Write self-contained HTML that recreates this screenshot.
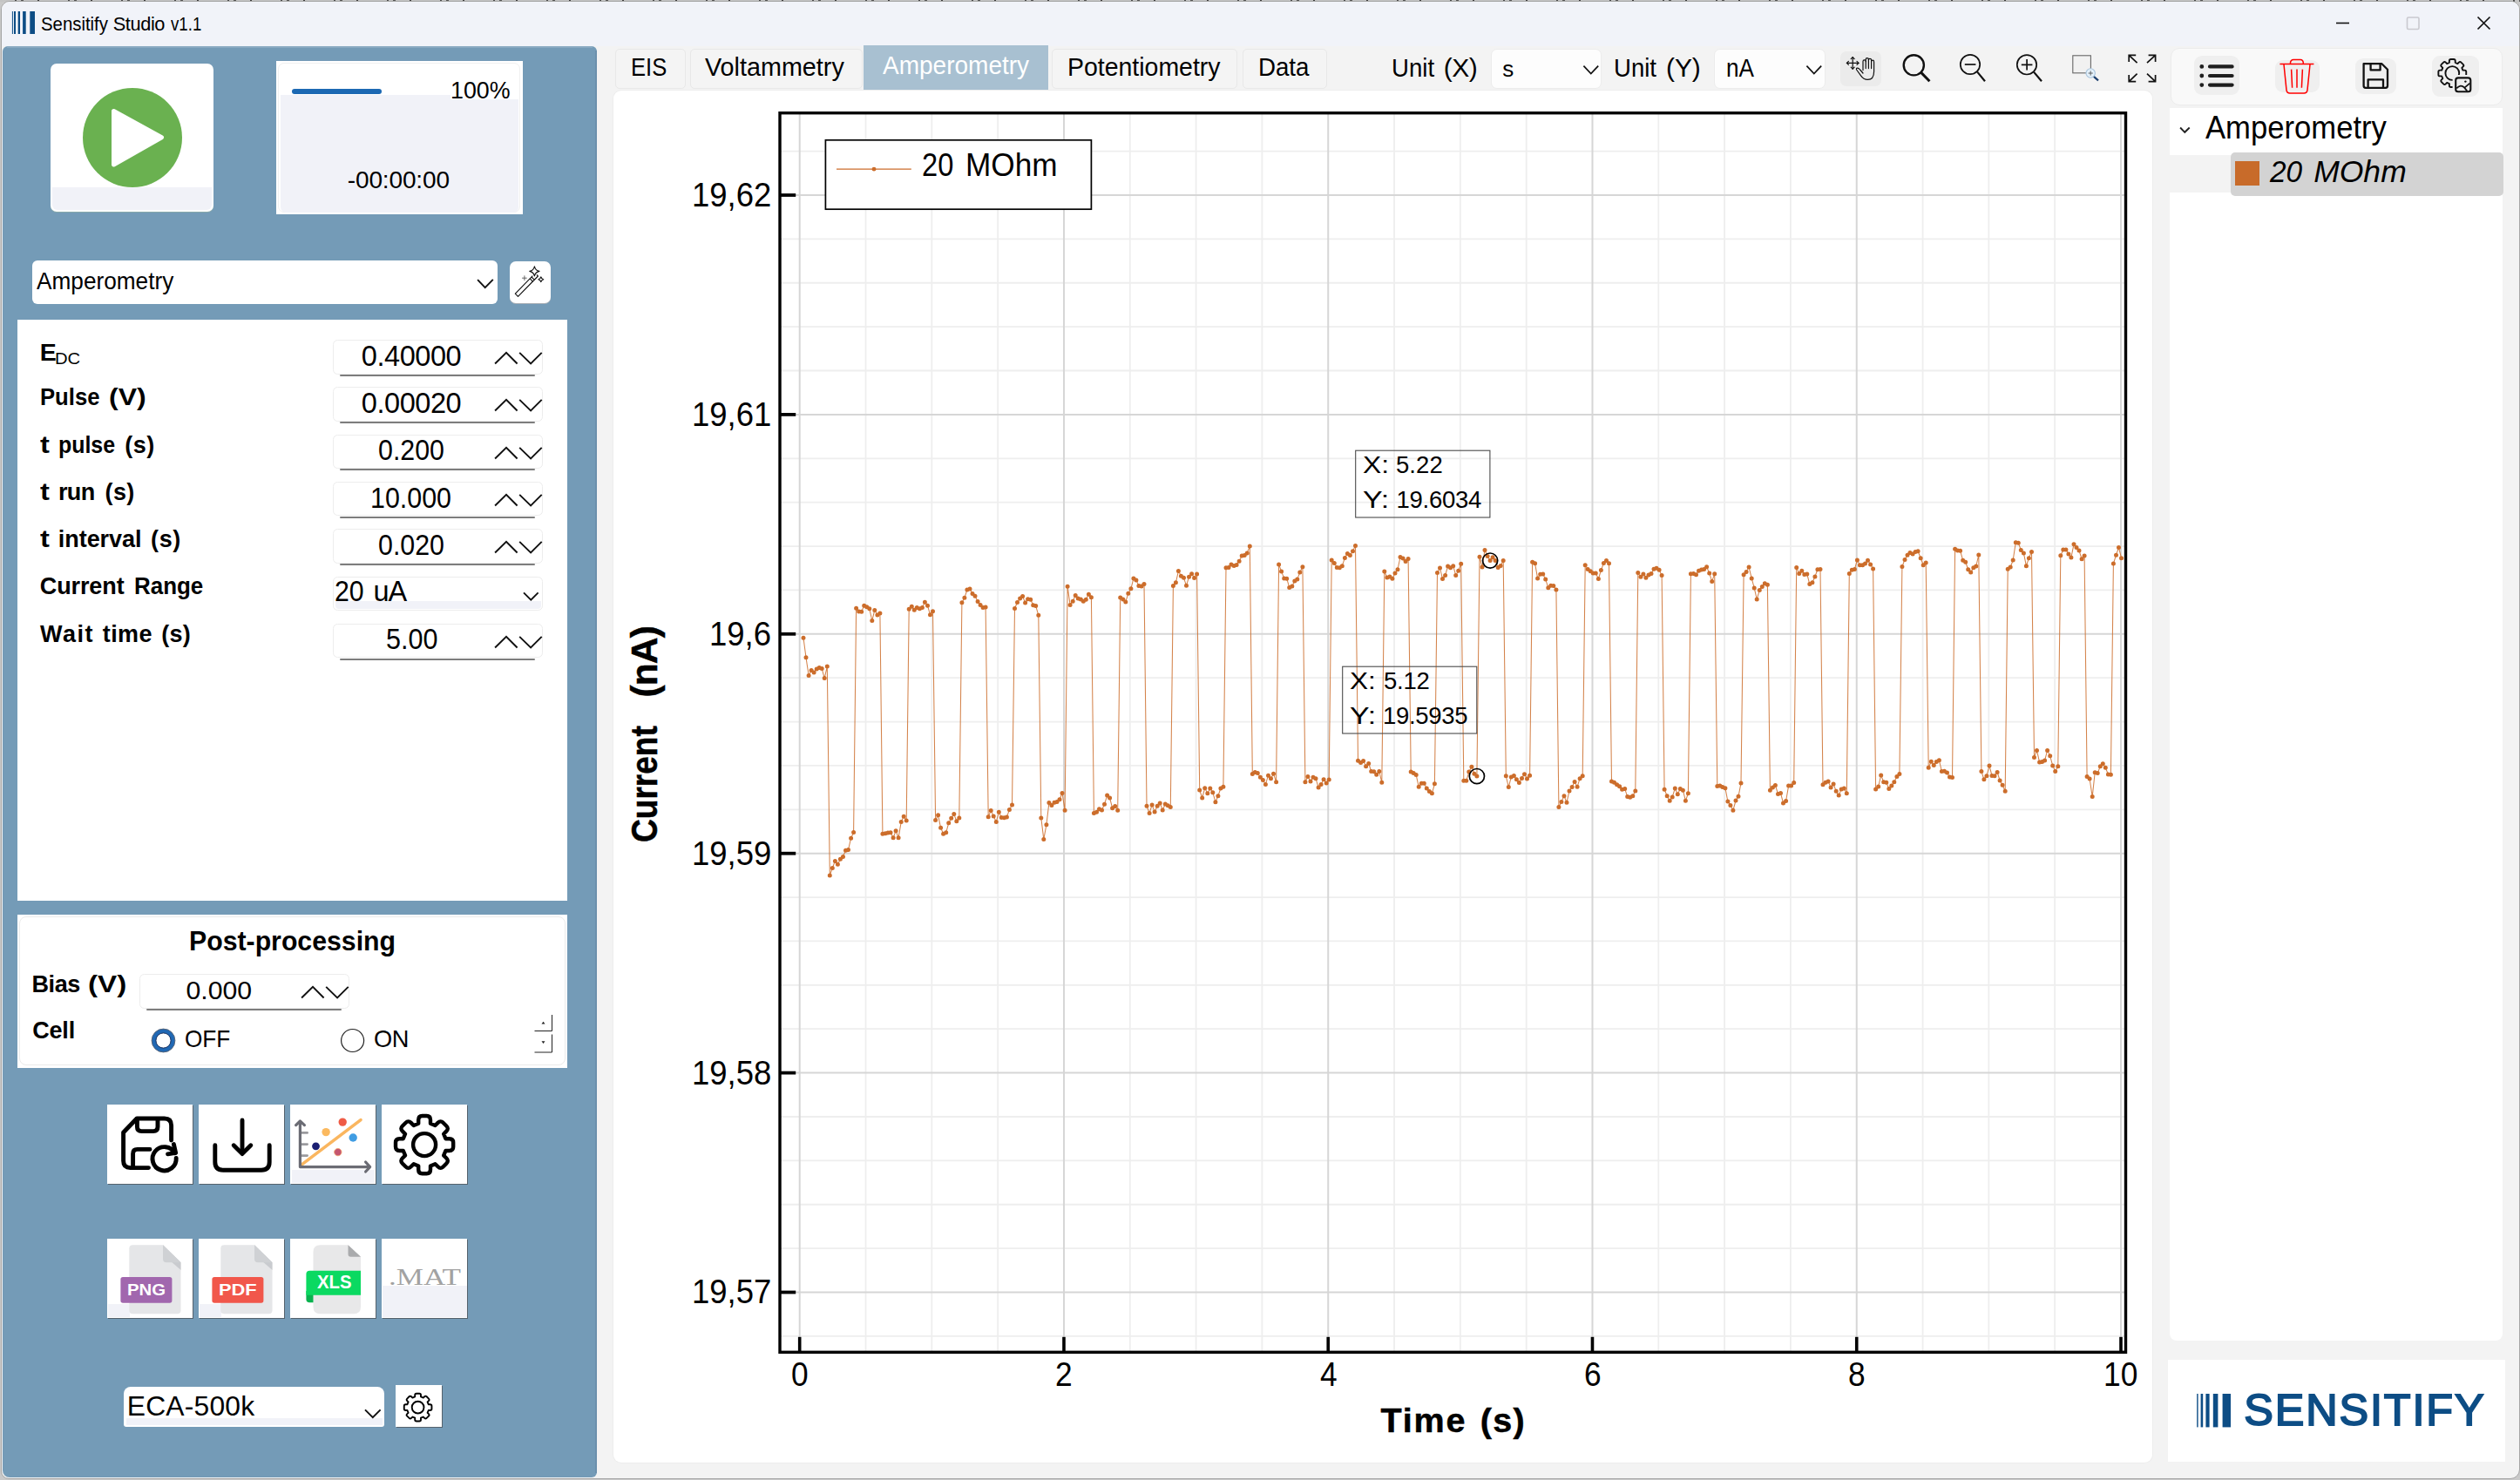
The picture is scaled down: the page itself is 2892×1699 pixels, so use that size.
<!DOCTYPE html>
<html><head><meta charset="utf-8"><title>Sensitify Studio v1.1</title>
<style>
html,body{margin:0;padding:0;}
body{width:2892px;height:1699px;position:relative;overflow:hidden;background:#c9c9c9;font-family:"Liberation Sans",sans-serif;}
.a{position:absolute;display:block;}
.t{position:absolute;white-space:pre;line-height:1;display:block;}
</style></head><body>

<div class="a" style="left:0;top:0;width:2892px;height:2px;background:repeating-linear-gradient(90deg,#c4c4c4 0 17px,#4a4a4a 17px 19px,#c4c4c4 19px 24px,#555 24px 27px,#c4c4c4 27px 43px,#3c3c3c 43px 45px,#c4c4c4 45px 61px)"></div>
<div class="a" style="left:0.8px;top:0.8px;width:2890.8px;height:1697.2px;background:#f3f3f3;border-radius:10px 10px 11px 9px;border:1px solid #a6a6a6;box-sizing:border-box;"></div>
<div class="a" style="left:1.8px;top:1.8px;width:2888.8px;height:51.2px;background:#f1f3f9;border-radius:9px 9px 0 0;"></div>
<svg class="a" style="left:0px;top:0px;" width="60" height="52" viewBox="0 0 60 52"><rect x="13.9" y="13" width="1" height="26" fill="#0d4d85"/><rect x="16" y="13" width="2" height="26" fill="#0d4d85"/><rect x="20.7" y="13" width="2.3" height="26" fill="#0d4d85"/><rect x="26.1" y="13" width="3.6" height="26" fill="#0d4d85"/><rect x="34.3" y="13" width="5.7" height="26" fill="#0d4d85"/></svg>
<span class="t" style="left:46.68px;top:16.55px;font-size:21.8px;color:#000;font-family:'Liberation Sans',sans-serif;transform:scaleX(0.9341);transform-origin:0 0;">Sensitify</span>
<span class="t" style="left:129.72px;top:16.55px;font-size:21.8px;color:#000;font-family:'Liberation Sans',sans-serif;letter-spacing:-0.41px;">Studio</span>
<span class="t" style="left:195.64px;top:16.55px;font-size:21.8px;color:#000;font-family:'Liberation Sans',sans-serif;transform:scaleX(0.8556);transform-origin:0 0;">v1.1</span>
<svg class="a" style="left:2660px;top:8px;" width="220" height="40" viewBox="0 0 220 40"><path d="M21 18.5H36" stroke="#111" stroke-width="1.6" fill="none"/><rect x="102.5" y="12" width="13.5" height="13.5" rx="1.5" fill="none" stroke="#c9c9cf" stroke-width="1.6"/><path d="M183.5 11.5L197.5 25.5M197.5 11.5L183.5 25.5" stroke="#111" stroke-width="1.7" fill="none"/></svg>
<div class="a" style="left:3px;top:53px;width:682.4px;height:1643px;background:#749bb7;border-radius:6px 6px 6px 8px;"></div>
<div class="a" style="left:683.4px;top:58px;width:2px;height:1633px;background:#6b90ac;"></div>
<div class="a" style="left:8px;top:53px;width:672px;height:1.6px;background:#8aaac2;"></div>
<div class="a" style="left:58px;top:73px;width:187px;height:170px;background:#fff;border-radius:7px;box-shadow:0 1px 0 #8aa;overflow:hidden;"></div>
<div class="a" style="left:60px;top:215px;width:183px;height:26px;background:#f1f2f8;border-radius:0 0 6px 6px;"></div>
<svg class="a" style="left:58px;top:73px;" width="187" height="170" viewBox="0 0 187 170"><circle cx="94" cy="85" r="57" fill="#6ab150"/><path d="M72.5 54.5 L127.5 84.8 L72.5 116 Z" fill="#fff" stroke="#fff" stroke-width="5" stroke-linejoin="round"/></svg>
<div class="a" style="left:317px;top:70px;width:282.5px;height:176px;background:#fff;"></div>
<div class="a" style="left:319.3px;top:71.9px;width:277.3px;height:172.6px;background:#fff;border-radius:7px;border:1.5px solid #f0f0f0;box-sizing:border-box;"></div>
<div class="a" style="left:322px;top:108.9px;width:273.3px;height:134.7px;background:#f1f2f8;border-radius:0 0 6px 6px;"></div>
<div class="a" style="left:517px;top:108.9px;width:78.3px;height:5.1px;background:#fff;"></div>
<div class="a" style="left:335px;top:102.3px;width:103px;height:5.9px;background:#1c69b3;border-radius:3px;"></div>
<span class="t" style="left:516.56px;top:88.96px;font-size:28.4px;color:#000;font-family:'Liberation Sans',sans-serif;transform:scaleX(0.9443);transform-origin:0 0;">100%</span>
<span class="t" style="left:398.77px;top:193.1px;font-size:28px;color:#000;font-family:'Liberation Sans',sans-serif;letter-spacing:-0.14px;">-00:00:00</span>
<div class="a" style="left:37.2px;top:298.9px;width:533.6px;height:50.5px;background:#fff;border-radius:6px;"></div>
<span class="t" style="left:41.75px;top:309.47px;font-size:27.8px;color:#000;font-family:'Liberation Sans',sans-serif;transform:scaleX(0.9428);transform-origin:0 0;">Amperometry</span>
<svg class="a" style="left:540px;top:310px;" width="36" height="30" viewBox="0 0 36 30"><path d="M8.1 11.1L16.7 20.2L25.8 10.8" fill="none" stroke="#111" stroke-width="1.9"/></svg>
<div class="a" style="left:585px;top:300.3px;width:47px;height:47.5px;background:#fff;border-radius:7px;box-shadow:0 1px 0 #a9b0b6;"></div>
<svg class="a" style="left:585px;top:300.3px;" width="47" height="47.5" viewBox="0 0 47 47.5"><g fill="none" stroke="#111" stroke-width="1.15" stroke-linejoin="round"><path d="M26.3 16.7 L6.3 37.1 L9.5 40.3 L32.4 17 L31 15.4"/><path d="M23.2 19.9 L26.4 23.1 M25 18 L28.2 21.2"/><path d="M28.4 5.8 Q29.4 10.4 34 11.4 Q29.4 12.4 28.4 17 Q27.4 12.4 22.8 11.4 Q27.4 10.4 28.4 5.8Z"/><path d="M35.8 17.9 Q36.4 20.2 38.7 20.8 Q36.4 21.4 35.8 23.7 Q35.2 21.4 32.9 20.8 Q35.2 20.2 35.8 17.9Z"/><path d="M14.1 19.2 H19.7 M16.9 16.4 V22" stroke="#555" stroke-width="0.9"/></g></svg>
<div class="a" style="left:19.8px;top:367px;width:631.2px;height:666.8px;background:#fff;"></div>
<span class="t" style="left:45.82px;top:390.17px;font-size:28.5px;color:#000;font-family:'Liberation Sans',sans-serif;font-weight:bold;">E</span>
<span class="t" style="left:63.14px;top:403.99px;font-size:17.5px;color:#000;font-family:'Liberation Sans',sans-serif;transform:scaleX(1.1558);transform-origin:0 0;">DC</span>
<div class="a" style="left:382.1px;top:390px;width:241px;height:39.5px;background:#fff;border-radius:5.5px;border:1.6px solid #ededed;box-sizing:border-box;"></div>
<div class="a" style="left:389.6px;top:429.8px;width:224.2px;height:2.1px;background:#7d7d7d;border-radius:1px;"></div>
<span class="t" style="left:414.83px;top:392.69px;font-size:32.5px;color:#000;font-family:'Liberation Sans',sans-serif;letter-spacing:-0.45px;">0.40000</span>
<svg class="a" style="left:563.1px;top:400px;" width="62" height="24" viewBox="0 0 62 24"><path d="M5.1 17.5 L18 4.9 L30.6 17.5" fill="none" stroke="#111" stroke-width="1.95"/><path d="M33.2 4.9 L46.1 17.5 L58.7 4.9" fill="none" stroke="#111" stroke-width="1.95"/></svg>
<span class="t" style="left:46.01px;top:442.84px;font-size:27px;color:#000;font-family:'Liberation Sans',sans-serif;font-weight:bold;transform:scaleX(0.9504);transform-origin:0 0;">Pulse</span>
<span class="t" style="left:125.43px;top:442.84px;font-size:27px;color:#000;font-family:'Liberation Sans',sans-serif;font-weight:bold;transform:scaleX(1.1876);transform-origin:0 0;">(V)</span>
<div class="a" style="left:382.1px;top:444.3px;width:241px;height:39.5px;background:#fff;border-radius:5.5px;border:1.6px solid #ededed;box-sizing:border-box;"></div>
<div class="a" style="left:389.6px;top:484.1px;width:224.2px;height:2.1px;background:#7d7d7d;border-radius:1px;"></div>
<span class="t" style="left:414.83px;top:446.99px;font-size:32.5px;color:#000;font-family:'Liberation Sans',sans-serif;letter-spacing:-0.45px;">0.00020</span>
<svg class="a" style="left:563.1px;top:454.3px;" width="62" height="24" viewBox="0 0 62 24"><path d="M5.1 17.5 L18 4.9 L30.6 17.5" fill="none" stroke="#111" stroke-width="1.95"/><path d="M33.2 4.9 L46.1 17.5 L58.7 4.9" fill="none" stroke="#111" stroke-width="1.95"/></svg>
<span class="t" style="left:45.81px;top:497.94px;font-size:27px;color:#000;font-family:'Liberation Sans',sans-serif;font-weight:bold;transform:scaleX(1.2106);transform-origin:0 0;">t</span>
<span class="t" style="left:67.08px;top:497.94px;font-size:27px;color:#000;font-family:'Liberation Sans',sans-serif;font-weight:bold;transform:scaleX(0.9226);transform-origin:0 0;">pulse</span>
<span class="t" style="left:143.28px;top:497.94px;font-size:27px;color:#000;font-family:'Liberation Sans',sans-serif;font-weight:bold;letter-spacing:0.48px;">(s)</span>
<div class="a" style="left:382.1px;top:498.6px;width:241px;height:39.5px;background:#fff;border-radius:5.5px;border:1.6px solid #ededed;box-sizing:border-box;"></div>
<div class="a" style="left:389.6px;top:538.4px;width:224.2px;height:2.1px;background:#7d7d7d;border-radius:1px;"></div>
<span class="t" style="left:434.27px;top:501.29px;font-size:32.5px;color:#000;font-family:'Liberation Sans',sans-serif;transform:scaleX(0.9339);transform-origin:0 0;">0.200</span>
<svg class="a" style="left:563.1px;top:508.6px;" width="62" height="24" viewBox="0 0 62 24"><path d="M5.1 17.5 L18 4.9 L30.6 17.5" fill="none" stroke="#111" stroke-width="1.95"/><path d="M33.2 4.9 L46.1 17.5 L58.7 4.9" fill="none" stroke="#111" stroke-width="1.95"/></svg>
<span class="t" style="left:45.81px;top:551.94px;font-size:27px;color:#000;font-family:'Liberation Sans',sans-serif;font-weight:bold;transform:scaleX(1.2106);transform-origin:0 0;">t</span>
<span class="t" style="left:66.95px;top:551.94px;font-size:27px;color:#000;font-family:'Liberation Sans',sans-serif;font-weight:bold;letter-spacing:-0.58px;">run</span>
<span class="t" style="left:120.58px;top:551.94px;font-size:27px;color:#000;font-family:'Liberation Sans',sans-serif;font-weight:bold;letter-spacing:0.38px;">(s)</span>
<div class="a" style="left:382.1px;top:552.9px;width:241px;height:39.5px;background:#fff;border-radius:5.5px;border:1.6px solid #ededed;box-sizing:border-box;"></div>
<div class="a" style="left:389.6px;top:592.7px;width:224.2px;height:2.1px;background:#7d7d7d;border-radius:1px;"></div>
<span class="t" style="left:425.19px;top:555.59px;font-size:32.5px;color:#000;font-family:'Liberation Sans',sans-serif;transform:scaleX(0.9354);transform-origin:0 0;">10.000</span>
<svg class="a" style="left:563.1px;top:562.9px;" width="62" height="24" viewBox="0 0 62 24"><path d="M5.1 17.5 L18 4.9 L30.6 17.5" fill="none" stroke="#111" stroke-width="1.95"/><path d="M33.2 4.9 L46.1 17.5 L58.7 4.9" fill="none" stroke="#111" stroke-width="1.95"/></svg>
<span class="t" style="left:45.81px;top:605.84px;font-size:27px;color:#000;font-family:'Liberation Sans',sans-serif;font-weight:bold;transform:scaleX(1.2106);transform-origin:0 0;">t</span>
<span class="t" style="left:66.84px;top:605.84px;font-size:27px;color:#000;font-family:'Liberation Sans',sans-serif;font-weight:bold;letter-spacing:-0.06px;">interval</span>
<span class="t" style="left:172.98px;top:605.84px;font-size:27px;color:#000;font-family:'Liberation Sans',sans-serif;font-weight:bold;letter-spacing:0.68px;">(s)</span>
<div class="a" style="left:382.1px;top:607.2px;width:241px;height:39.5px;background:#fff;border-radius:5.5px;border:1.6px solid #ededed;box-sizing:border-box;"></div>
<div class="a" style="left:389.6px;top:647px;width:224.2px;height:2.1px;background:#7d7d7d;border-radius:1px;"></div>
<span class="t" style="left:434.27px;top:609.89px;font-size:32.5px;color:#000;font-family:'Liberation Sans',sans-serif;transform:scaleX(0.9339);transform-origin:0 0;">0.020</span>
<svg class="a" style="left:563.1px;top:617.2px;" width="62" height="24" viewBox="0 0 62 24"><path d="M5.1 17.5 L18 4.9 L30.6 17.5" fill="none" stroke="#111" stroke-width="1.95"/><path d="M33.2 4.9 L46.1 17.5 L58.7 4.9" fill="none" stroke="#111" stroke-width="1.95"/></svg>
<span class="t" style="left:45.79px;top:659.74px;font-size:27px;color:#000;font-family:'Liberation Sans',sans-serif;font-weight:bold;letter-spacing:-0.11px;">Current</span>
<span class="t" style="left:153.89px;top:659.74px;font-size:27px;color:#000;font-family:'Liberation Sans',sans-serif;font-weight:bold;transform:scaleX(0.9610);transform-origin:0 0;">Range</span>
<div class="a" style="left:382.1px;top:661.5px;width:241px;height:39.3px;background:#fff;border-radius:5.5px;border:1.6px solid #ededed;box-sizing:border-box;"></div>
<div class="a" style="left:384.7px;top:689.7px;width:236.8px;height:9px;background:#f1f2f8;border-radius:0 0 4px 4px;"></div>
<span class="t" style="left:384.39px;top:662.59px;font-size:32.5px;color:#000;font-family:'Liberation Sans',sans-serif;transform:scaleX(0.9315);transform-origin:0 0;">20</span>
<span class="t" style="left:428.52px;top:662.59px;font-size:32.5px;color:#000;font-family:'Liberation Sans',sans-serif;letter-spacing:-1px;">uA</span>
<svg class="a" style="left:596px;top:673.5px;" width="28" height="20" viewBox="0 0 28 20"><path d="M5 6.4L13.3 14.6L21.6 6.4" fill="none" stroke="#111" stroke-width="1.9"/></svg>
<span class="t" style="left:46.07px;top:714.84px;font-size:27px;color:#000;font-family:'Liberation Sans',sans-serif;font-weight:bold;letter-spacing:1.52px;">Wait</span>
<span class="t" style="left:117.78px;top:714.84px;font-size:27px;color:#000;font-family:'Liberation Sans',sans-serif;font-weight:bold;letter-spacing:0.41px;">time</span>
<span class="t" style="left:185.28px;top:714.84px;font-size:27px;color:#000;font-family:'Liberation Sans',sans-serif;font-weight:bold;letter-spacing:0.28px;">(s)</span>
<div class="a" style="left:382.1px;top:715.8px;width:241px;height:39.5px;background:#fff;border-radius:5.5px;border:1.6px solid #ededed;box-sizing:border-box;"></div>
<div class="a" style="left:389.6px;top:755.6px;width:224.2px;height:2.1px;background:#7d7d7d;border-radius:1px;"></div>
<span class="t" style="left:442.53px;top:718.49px;font-size:32.5px;color:#000;font-family:'Liberation Sans',sans-serif;transform:scaleX(0.9389);transform-origin:0 0;">5.00</span>
<svg class="a" style="left:563.1px;top:725.8px;" width="62" height="24" viewBox="0 0 62 24"><path d="M5.1 17.5 L18 4.9 L30.6 17.5" fill="none" stroke="#111" stroke-width="1.95"/><path d="M33.2 4.9 L46.1 17.5 L58.7 4.9" fill="none" stroke="#111" stroke-width="1.95"/></svg>
<div class="a" style="left:19.8px;top:1049.9px;width:631.2px;height:175.8px;background:#fff;"></div>
<div class="a" style="left:21.8px;top:1052.2px;width:627.2px;height:170.8px;border-radius:8px;border:1.3px solid #ebebeb;box-sizing:border-box;"></div>
<span class="t" style="left:217.3px;top:1064.94px;font-size:31.5px;color:#000;font-family:'Liberation Sans',sans-serif;font-weight:bold;transform:scaleX(0.9604);transform-origin:0 0;">Post-processing</span>
<span class="t" style="left:36.52px;top:1116.94px;font-size:27px;color:#000;font-family:'Liberation Sans',sans-serif;font-weight:bold;letter-spacing:-0.42px;">Bias</span>
<span class="t" style="left:101.47px;top:1116.94px;font-size:27px;color:#000;font-family:'Liberation Sans',sans-serif;font-weight:bold;transform:scaleX(1.2296);transform-origin:0 0;">(V)</span>
<div class="a" style="left:160px;top:1118.4px;width:241px;height:39.5px;background:#fff;border-radius:5.5px;border:1.6px solid #ededed;box-sizing:border-box;"></div>
<div class="a" style="left:167.5px;top:1158.2px;width:224.2px;height:2.1px;background:#7d7d7d;border-radius:1px;"></div>
<span class="t" style="left:213.42px;top:1122.44px;font-size:30.2px;color:#000;font-family:'Liberation Sans',sans-serif;letter-spacing:0.04px;">0.000</span>
<svg class="a" style="left:341px;top:1128.4px;" width="62" height="24" viewBox="0 0 62 24"><path d="M5.1 17.5 L18 4.9 L30.6 17.5" fill="none" stroke="#111" stroke-width="1.95"/><path d="M33.2 4.9 L46.1 17.5 L58.7 4.9" fill="none" stroke="#111" stroke-width="1.95"/></svg>
<span class="t" style="left:37.19px;top:1169.54px;font-size:27px;color:#000;font-family:'Liberation Sans',sans-serif;font-weight:bold;letter-spacing:-0.17px;">Cell</span>
<svg class="a" style="left:170px;top:1177px;" width="36" height="36" viewBox="0 0 36 36"><circle cx="17.5" cy="17.5" r="10.9" fill="#fff" stroke="#2068b4" stroke-width="5"/><circle cx="17.5" cy="17.5" r="13.4" fill="none" stroke="#5a6270" stroke-width="0.9"/><circle cx="17.5" cy="17.5" r="8.6" fill="none" stroke="#1a2a55" stroke-width="0.9"/></svg>
<span class="t" style="left:211.97px;top:1178.88px;font-size:27.2px;color:#000;font-family:'Liberation Sans',sans-serif;transform:scaleX(0.9628);transform-origin:0 0;">OFF</span>
<svg class="a" style="left:387px;top:1177px;" width="36" height="36" viewBox="0 0 36 36"><circle cx="17.6" cy="17.5" r="13" fill="#fff" stroke="#222" stroke-width="1.2"/></svg>
<span class="t" style="left:429.12px;top:1178.88px;font-size:27.2px;color:#000;font-family:'Liberation Sans',sans-serif;letter-spacing:-0.52px;">ON</span>
<svg class="a" style="left:610px;top:1162px;" width="28" height="50" viewBox="0 0 28 50"><path d="M23.5 3 V21.5 H3.5 M23.5 25.5 V46 H3.5" fill="none" stroke="#222" stroke-width="1"/><path d="M11.5 13.6 L13.5 10.8 L15.5 13.6Z M11.5 33.2 L13.5 36 L15.5 33.2Z" fill="#222"/></svg>
<div class="a" style="left:122.8px;top:1267.8px;width:98.4px;height:91.3px;background:#fff;box-shadow:1px 1px 0 #55626c;"></div>
<div class="a" style="left:227.8px;top:1267.8px;width:98.4px;height:91.3px;background:#fff;box-shadow:1px 1px 0 #55626c;"></div>
<div class="a" style="left:333px;top:1267.8px;width:98.4px;height:91.3px;background:#fff;box-shadow:1px 1px 0 #55626c;"></div>
<div class="a" style="left:438px;top:1267.8px;width:98.4px;height:91.3px;background:#fff;box-shadow:1px 1px 0 #55626c;"></div>
<div class="a" style="left:122.8px;top:1421.8px;width:98.4px;height:91.3px;background:#fff;box-shadow:1px 1px 0 #55626c;"></div>
<div class="a" style="left:227.8px;top:1421.8px;width:98.4px;height:91.3px;background:#fff;box-shadow:1px 1px 0 #55626c;"></div>
<div class="a" style="left:333px;top:1421.8px;width:98.4px;height:91.3px;background:#fff;box-shadow:1px 1px 0 #55626c;"></div>
<div class="a" style="left:438px;top:1421.8px;width:98.4px;height:91.3px;background:#fff;box-shadow:1px 1px 0 #55626c;"></div>
<svg class="a" style="left:122.8px;top:1267.8px;" width="99" height="92" viewBox="0 0 99 92"><g fill="none" stroke="#000" stroke-width="4.9" stroke-linecap="round" stroke-linejoin="round"><path d="M73.6 41 V24 Q73.6 16 65.6 16 H34 L18.6 32 V64.6 Q18.6 72.6 26.6 72.6 H47.5"/><path d="M34.4 16.4 V25.6 Q34.4 30.6 39.4 30.6 H53 Q58 30.6 58 25.6 V16.4"/><path d="M29.6 72 V56.4 Q29.6 51.4 34.6 51.4 H49"/><path d="M77.6 55.8 A13.6 13.6 0 1 0 79.2 61.4"/><path d="M76.4 45.6 L78.6 55.4 L69.6 56.8"/></g></svg>
<svg class="a" style="left:227.8px;top:1267.8px;" width="99" height="92" viewBox="0 0 99 92"><g fill="none" stroke="#000" stroke-width="4.9" stroke-linecap="round" stroke-linejoin="round"><path d="M50 18 V56"/><path d="M40.2 46.8 L50 56.6 L59.8 46.8"/><path d="M18.8 46.8 V66 Q18.8 75.2 28 75.2 H72 Q81.2 75.2 81.2 66 V46.8"/></g></svg>
<div class="a" style="left:334.5px;top:1343.3px;width:95.5px;height:15px;background:#f1f2f8;"></div>
<svg class="a" style="left:333px;top:1267.8px;" width="99" height="92" viewBox="0 0 99 92"><path d="M19.6 32.4H13 M19.6 45.6H13 M19.6 58.6H13" stroke="#9a9a9e" stroke-width="2.8" stroke-linecap="round" fill="none"/><path d="M14 68.4 L81 17.6" stroke="#fab65f" stroke-width="3.6" stroke-linecap="round" fill="none"/><g fill="none" stroke="#6b6c74" stroke-width="3.2" stroke-linecap="round" stroke-linejoin="round"><path d="M11.4 21 V71.6 H90"/><path d="M6.6 23.6 L11.4 19 L16.4 23.6"/><path d="M86.6 66 L91.6 71.6 L86.6 77"/></g><circle cx="60.2" cy="20.1" r="4.7" fill="#ef5b45"/><circle cx="41.1" cy="31.6" r="4.7" fill="#fbb95f"/><circle cx="72.2" cy="38" r="4.7" fill="#409de3"/><circle cx="29.5" cy="47.8" r="4.4" fill="#1b1f72"/><circle cx="54.8" cy="54.6" r="4.2" fill="#c5566f" stroke="#f2a06a" stroke-width="0.8"/></svg>
<svg class="a" style="left:438px;top:1267.8px;" width="99" height="92" viewBox="0 0 99 92"><path d="M42.2 21.76 L42.2 17.39 Q42.2 13.01 46.6 13.01 L51.6 13.01 Q56 13.01 56 17.39 L56 21.76 L61.43 24.01 L64.53 20.92 Q67.62 17.82 70.73 20.94 L74.26 24.47 Q77.38 27.58 74.28 30.67 L71.19 33.77 L73.44 39.2 L77.81 39.2 Q82.19 39.2 82.19 43.6 L82.19 48.6 Q82.19 53 77.81 53 L73.44 53 L71.19 58.43 L74.28 61.53 Q77.38 64.62 74.26 67.73 L70.73 71.26 Q67.62 74.38 64.53 71.28 L61.43 68.19 L56 70.44 L56 74.81 Q56 79.19 51.6 79.19 L46.6 79.19 Q42.2 79.19 42.2 74.81 L42.2 70.44 L36.77 68.19 L33.67 71.28 Q30.58 74.38 27.47 71.26 L23.94 67.73 Q20.82 64.62 23.92 61.53 L27.01 58.43 L24.76 53 L20.39 53 Q16.01 53 16.01 48.6 L16.01 43.6 Q16.01 39.2 20.39 39.2 L24.76 39.2 L27.01 33.77 L23.92 30.67 Q20.82 27.58 23.94 24.47 L27.47 20.94 Q30.58 17.82 33.67 20.92 L36.77 24.01 Z" fill="none" stroke="#000" stroke-width="4.4" stroke-linejoin="round"/><circle cx="49.1" cy="46.1" r="13" fill="none" stroke="#000" stroke-width="4.4"/></svg>
<div class="a" style="left:124.3px;top:1497.3px;width:24.5px;height:15px;background:#f1f2f8;"></div>
<svg class="a" style="left:122.8px;top:1421.8px;" width="99" height="92" viewBox="0 0 99 92"><path d="M29.3 7.2 H64 L84.5 27.3 V82.2 Q84.5 86.2 80.5 86.2 H29.3 Q25.3 86.2 25.3 82.2 V11.2 Q25.3 7.2 29.3 7.2Z" fill="#e5e6e8"/><path d="M64 7.2 L84.5 27.3 L84.5 36 L64 18 Z" fill="#c9cbcf"/><path d="M64 7.2 L84.5 27.3 L68 27.3 Q64 27.3 64 23.3 Z" fill="#cfd1d4"/><rect x="15.4" y="44" width="59" height="29.7" rx="2.6" fill="#a167ae"/></svg>
<span class="t" style="left:145.61px;top:1471.59px;font-size:18.2px;color:#fff;font-family:'Liberation Sans',sans-serif;font-weight:bold;transform:scaleX(1.1183);transform-origin:0 0;">PNG</span>
<div class="a" style="left:229.3px;top:1497.3px;width:24.5px;height:15px;background:#f1f2f8;"></div>
<svg class="a" style="left:227.8px;top:1421.8px;" width="99" height="92" viewBox="0 0 99 92"><path d="M29.3 7.2 H64 L84.5 27.3 V82.2 Q84.5 86.2 80.5 86.2 H29.3 Q25.3 86.2 25.3 82.2 V11.2 Q25.3 7.2 29.3 7.2Z" fill="#e5e6e8"/><path d="M64 7.2 L84.5 27.3 L84.5 36 L64 18 Z" fill="#c9cbcf"/><path d="M64 7.2 L84.5 27.3 L68 27.3 Q64 27.3 64 23.3 Z" fill="#cfd1d4"/><rect x="15.4" y="44" width="59" height="29.7" rx="2.6" fill="#f1574b"/></svg>
<span class="t" style="left:250.51px;top:1471.59px;font-size:18.2px;color:#fff;font-family:'Liberation Sans',sans-serif;font-weight:bold;transform:scaleX(1.2014);transform-origin:0 0;">PDF</span>
<svg class="a" style="left:333px;top:1421.8px;" width="99" height="92" viewBox="0 0 99 92"><path d="M34.5 7.2 H66.5 L81 20.8 V78.2 Q81 86.2 73 86.2 H34.5 Q26.5 86.2 26.5 78.2 V15.2 Q26.5 7.2 34.5 7.2Z" fill="#e8e8e9"/><path d="M66.5 7.2 L81 20.8 H69.5 Q66.5 20.8 66.5 17.8 Z" fill="#aaabad"/><path d="M18.4 60 V69.4 Q18.4 73.2 22.2 73.2 L26.5 73.2 V60Z" fill="#09b24f"/><path d="M22.4 36.7 H81 V64.8 H18.4 V40.7 Q18.4 36.7 22.4 36.7Z" fill="#0bd961"/></svg>
<span class="t" style="left:364.09px;top:1461.9px;font-size:21.5px;color:#fff;font-family:'Liberation Sans',sans-serif;font-weight:bold;transform:scaleX(0.9435);transform-origin:0 0;">XLS</span>
<div class="a" style="left:439px;top:1475.6px;width:97px;height:36.7px;background:#f1f2f8;"></div>
<span class="t" style="left:445.72px;top:1451.95px;font-size:28px;color:#a2a2a2;font-family:'Liberation Serif',serif;transform:scaleX(1.2531);transform-origin:0 0;">.MAT</span>
<div class="a" style="left:142px;top:1592px;width:299px;height:46px;background:#fff;border-radius:8px 8px 3px 3px;"></div>
<div class="a" style="left:144.5px;top:1628px;width:294.5px;height:8.4px;background:#f1f2f8;"></div>
<span class="t" style="left:145.79px;top:1599.38px;font-size:31.8px;color:#000;font-family:'Liberation Sans',sans-serif;letter-spacing:0.2px;">ECA-500k</span>
<svg class="a" style="left:414px;top:1614px;" width="28" height="18" viewBox="0 0 28 18"><path d="M5 4.4L13.8 13.2L22.6 4.4" fill="none" stroke="#111" stroke-width="2"/></svg>
<div class="a" style="left:454px;top:1590px;width:52.8px;height:47.6px;background:#fff;box-shadow:1px 1px 0 #55626c;"></div>
<svg class="a" style="left:454px;top:1590px;" width="54" height="48" viewBox="0 0 54 48"><path d="M22.2 13.47 L22.2 11.54 Q22.2 9.76 23.98 9.76 L27.22 9.76 Q29 9.76 29 11.54 L29 13.47 L31.77 14.62 L33.13 13.25 Q34.39 11.99 35.65 13.25 L37.95 15.55 Q39.21 16.81 37.95 18.07 L36.58 19.43 L37.73 22.2 L39.66 22.2 Q41.44 22.2 41.44 23.98 L41.44 27.22 Q41.44 29 39.66 29 L37.73 29 L36.58 31.77 L37.95 33.13 Q39.21 34.39 37.95 35.65 L35.65 37.95 Q34.39 39.21 33.13 37.95 L31.77 36.58 L29 37.73 L29 39.66 Q29 41.44 27.22 41.44 L23.98 41.44 Q22.2 41.44 22.2 39.66 L22.2 37.73 L19.43 36.58 L18.07 37.95 Q16.81 39.21 15.55 37.95 L13.25 35.65 Q11.99 34.39 13.25 33.13 L14.62 31.77 L13.47 29 L11.54 29 Q9.76 29 9.76 27.22 L9.76 23.98 Q9.76 22.2 11.54 22.2 L13.47 22.2 L14.62 19.43 L13.25 18.07 Q11.99 16.81 13.25 15.55 L15.55 13.25 Q16.81 11.99 18.07 13.25 L19.43 14.62 Z" fill="none" stroke="#000" stroke-width="1.9" stroke-linejoin="round"/><circle cx="25.6" cy="25.6" r="6.9" fill="none" stroke="#000" stroke-width="1.9"/></svg>
<div class="a" style="left:706.3px;top:55.9px;width:80.3px;height:45.9px;background:#f4f4f4;border-radius:5px;border:1.4px solid #e8e8e8;box-sizing:border-box;"></div>
<span class="t" style="left:724.4px;top:62.11px;font-size:30px;color:#000;font-family:'Liberation Sans',sans-serif;transform:scaleX(0.8530);transform-origin:0 0;">EIS</span>
<div class="a" style="left:792px;top:55.9px;width:197.6px;height:45.9px;background:#f4f4f4;border-radius:5px;border:1.4px solid #e8e8e8;box-sizing:border-box;"></div>
<span class="t" style="left:809.48px;top:62.11px;font-size:30px;color:#000;font-family:'Liberation Sans',sans-serif;transform:scaleX(0.9584);transform-origin:0 0;">Voltammetry</span>
<div class="a" style="left:991px;top:52.2px;width:211.8px;height:50.8px;background:#a8c0d1;"></div>
<span class="t" style="left:1012.94px;top:60.01px;font-size:30px;color:#fff;font-family:'Liberation Sans',sans-serif;transform:scaleX(0.9336);transform-origin:0 0;">Amperometry</span>
<div class="a" style="left:1206.8px;top:55.9px;width:213.2px;height:45.9px;background:#f4f4f4;border-radius:5px;border:1.4px solid #e8e8e8;box-sizing:border-box;"></div>
<span class="t" style="left:1224.77px;top:62.11px;font-size:30px;color:#000;font-family:'Liberation Sans',sans-serif;transform:scaleX(0.9482);transform-origin:0 0;">Potentiometry</span>
<div class="a" style="left:1425.5px;top:55.9px;width:97.9px;height:45.9px;background:#f4f4f4;border-radius:5px;border:1.4px solid #e8e8e8;box-sizing:border-box;"></div>
<span class="t" style="left:1444.03px;top:62.11px;font-size:30px;color:#000;font-family:'Liberation Sans',sans-serif;transform:scaleX(0.9224);transform-origin:0 0;">Data</span>
<span class="t" style="left:1596.97px;top:63.41px;font-size:30px;color:#000;font-family:'Liberation Sans',sans-serif;transform:scaleX(0.9204);transform-origin:0 0;">Unit</span>
<span class="t" style="left:1656.84px;top:63.41px;font-size:30px;color:#000;font-family:'Liberation Sans',sans-serif;letter-spacing:-0.49px;">(X)</span>
<div class="a" style="left:1711px;top:56px;width:127.4px;height:45.6px;background:#fdfdfd;border-radius:7px;border:1.3px solid #ececec;box-sizing:border-box;"></div>
<span class="t" style="left:1724.3px;top:66.39px;font-size:26px;color:#000;font-family:'Liberation Sans',sans-serif;">s</span>
<svg class="a" style="left:1812px;top:70px;" width="28" height="20" viewBox="0 0 28 20"><path d="M5.4 5.6L13.8 14.6L22.2 5.6" fill="none" stroke="#111" stroke-width="1.7"/></svg>
<span class="t" style="left:1852.28px;top:63.41px;font-size:30px;color:#000;font-family:'Liberation Sans',sans-serif;transform:scaleX(0.9184);transform-origin:0 0;">Unit</span>
<span class="t" style="left:1912.04px;top:63.41px;font-size:30px;color:#000;font-family:'Liberation Sans',sans-serif;letter-spacing:-0.09px;">(Y)</span>
<div class="a" style="left:1967.4px;top:56px;width:127.3px;height:45.6px;background:#fdfdfd;border-radius:7px;border:1.3px solid #ececec;box-sizing:border-box;"></div>
<span class="t" style="left:1980.87px;top:64.05px;font-size:29px;color:#000;font-family:'Liberation Sans',sans-serif;transform:scaleX(0.9016);transform-origin:0 0;">nA</span>
<svg class="a" style="left:2068px;top:70px;" width="28" height="20" viewBox="0 0 28 20"><path d="M5.4 5.6L13.8 14.6L22.2 5.6" fill="none" stroke="#111" stroke-width="1.7"/></svg>
<div class="a" style="left:2112px;top:59.3px;width:46.5px;height:39.9px;background:#ebebeb;border-radius:7px;"></div>
<svg class="a" style="left:2100px;top:50px;" width="390" height="60" viewBox="0 0 390 60"><g fill="none" stroke="#111" stroke-width="1.2" stroke-linecap="round" stroke-linejoin="round"><path d="M19.4 22.4H33 M26.2 15.6V29.2"/><path d="M21.4 20.4L19.4 22.4L21.4 24.4 M31 20.4L33 22.4L31 24.4 M24.2 17.6L26.2 15.6L28.2 17.6 M24.2 27.2L26.2 29.2L28.2 27.2"/><path d="M38 30.6 V20.6 Q38 18.8 39.6 18.8 Q41.2 18.8 41.2 20.6 V18.2 Q41.2 16.6 42.8 16.6 Q44.4 16.6 44.4 18.2 V18.8 Q44.4 17.4 46 17.4 Q47.6 17.4 47.6 19 V20.6 Q47.6 19.2 49.2 19.2 Q50.6 19.2 50.6 21 V32 Q50.6 41.4 43.4 41.4 Q38.6 41.4 35.4 36.6 L30.6 30 Q30 28.4 31.4 28.2 Q33 28 34.6 30 L38 34"/><path d="M41.2 20.6V28.6 M44.4 18.8V28.6 M47.6 20.6V28.6"/></g><circle cx="96.3" cy="24.8" r="11.6" fill="none" stroke="#111" stroke-width="2.4"/><path d="M104.8 33.4L114.4 43.2" stroke="#111" stroke-width="3" fill="none"/><circle cx="161" cy="24" r="11.2" fill="none" stroke="#111" stroke-width="1.7"/><path d="M169 32.4L178 43.2" stroke="#111" stroke-width="2.2" fill="none"/><path d="M154.8 24H167.4" stroke="#111" stroke-width="1.7"/><circle cx="226" cy="24.3" r="11.2" fill="none" stroke="#111" stroke-width="1.7"/><path d="M234 32.6L243 43.2" stroke="#111" stroke-width="2.2" fill="none"/><path d="M219.8 24.3H232.4 M226.1 18V30.6" stroke="#111" stroke-width="1.7"/><rect x="278.8" y="13.8" width="20.6" height="20" fill="#f1f1f1" stroke="#666" stroke-width="1.1"/><path d="M302.6 37.6L308 42.4" stroke="#1c3f6e" stroke-width="2.2" fill="none"/><circle cx="299.2" cy="34" r="5.2" fill="#e4f1fb" stroke="#a9c4dc" stroke-width="1.1"/><path d="M296.6 34H301.8 M299.2 31.4V36.6" stroke="#555" stroke-width="0.9"/><g fill="none" stroke="#111" stroke-width="1.7"><path d="M343.2 13.4L352.6 22.2 M343.2 21V13.4H351.2"/><path d="M373.6 13.4L364 22.2 M373.6 21V13.4H365.6"/><path d="M343.2 43.6L352.6 34.6 M343.2 36V43.6H351.2"/><path d="M373.6 43.6L364 34.6 M373.6 36V43.6H365.6"/></g></svg>
<div class="a" style="left:703.6px;top:103.5px;width:1766.9px;height:1575px;background:#fff;border-radius:9px;box-shadow:0 0 0 1px #ededed;"></div>
<svg class="a" style="left:0;top:0" width="2892" height="1699" viewBox="0 0 2892 1699"><path d="M993.52 129.7 V1552.3" stroke="#eeeeee" stroke-width="1.8"/><path d="M1069.33 129.7 V1552.3" stroke="#eeeeee" stroke-width="1.8"/><path d="M1145.14 129.7 V1552.3" stroke="#eeeeee" stroke-width="1.8"/><path d="M1296.78 129.7 V1552.3" stroke="#eeeeee" stroke-width="1.8"/><path d="M1372.59 129.7 V1552.3" stroke="#eeeeee" stroke-width="1.8"/><path d="M1448.4 129.7 V1552.3" stroke="#eeeeee" stroke-width="1.8"/><path d="M1600.04 129.7 V1552.3" stroke="#eeeeee" stroke-width="1.8"/><path d="M1675.85 129.7 V1552.3" stroke="#eeeeee" stroke-width="1.8"/><path d="M1751.66 129.7 V1552.3" stroke="#eeeeee" stroke-width="1.8"/><path d="M1903.3 129.7 V1552.3" stroke="#eeeeee" stroke-width="1.8"/><path d="M1979.11 129.7 V1552.3" stroke="#eeeeee" stroke-width="1.8"/><path d="M2054.93 129.7 V1552.3" stroke="#eeeeee" stroke-width="1.8"/><path d="M2206.56 129.7 V1552.3" stroke="#eeeeee" stroke-width="1.8"/><path d="M2282.37 129.7 V1552.3" stroke="#eeeeee" stroke-width="1.8"/><path d="M2358.18 129.7 V1552.3" stroke="#eeeeee" stroke-width="1.8"/><path d="M895 1533.88 H2439.5" stroke="#eeeeee" stroke-width="1.8"/><path d="M895 1433.12 H2439.5" stroke="#eeeeee" stroke-width="1.8"/><path d="M895 1382.74 H2439.5" stroke="#eeeeee" stroke-width="1.8"/><path d="M895 1332.36 H2439.5" stroke="#eeeeee" stroke-width="1.8"/><path d="M895 1281.98 H2439.5" stroke="#eeeeee" stroke-width="1.8"/><path d="M895 1181.22 H2439.5" stroke="#eeeeee" stroke-width="1.8"/><path d="M895 1130.84 H2439.5" stroke="#eeeeee" stroke-width="1.8"/><path d="M895 1080.46 H2439.5" stroke="#eeeeee" stroke-width="1.8"/><path d="M895 1030.08 H2439.5" stroke="#eeeeee" stroke-width="1.8"/><path d="M895 929.32 H2439.5" stroke="#eeeeee" stroke-width="1.8"/><path d="M895 878.94 H2439.5" stroke="#eeeeee" stroke-width="1.8"/><path d="M895 828.56 H2439.5" stroke="#eeeeee" stroke-width="1.8"/><path d="M895 778.18 H2439.5" stroke="#eeeeee" stroke-width="1.8"/><path d="M895 677.42 H2439.5" stroke="#eeeeee" stroke-width="1.8"/><path d="M895 627.04 H2439.5" stroke="#eeeeee" stroke-width="1.8"/><path d="M895 576.66 H2439.5" stroke="#eeeeee" stroke-width="1.8"/><path d="M895 526.28 H2439.5" stroke="#eeeeee" stroke-width="1.8"/><path d="M895 425.52 H2439.5" stroke="#eeeeee" stroke-width="1.8"/><path d="M895 375.14 H2439.5" stroke="#eeeeee" stroke-width="1.8"/><path d="M895 324.76 H2439.5" stroke="#eeeeee" stroke-width="1.8"/><path d="M895 274.38 H2439.5" stroke="#eeeeee" stroke-width="1.8"/><path d="M895 173.62 H2439.5" stroke="#eeeeee" stroke-width="1.8"/><path d="M917.7 129.7 V1552.3" stroke="#d6d6d6" stroke-width="2"/><path d="M1220.96 129.7 V1552.3" stroke="#d6d6d6" stroke-width="2"/><path d="M1524.22 129.7 V1552.3" stroke="#d6d6d6" stroke-width="2"/><path d="M1827.48 129.7 V1552.3" stroke="#d6d6d6" stroke-width="2"/><path d="M2130.74 129.7 V1552.3" stroke="#d6d6d6" stroke-width="2"/><path d="M2434 129.7 V1552.3" stroke="#d6d6d6" stroke-width="2"/><path d="M895 1483.5 H2439.5" stroke="#d6d6d6" stroke-width="2"/><path d="M895 1231.6 H2439.5" stroke="#d6d6d6" stroke-width="2"/><path d="M895 979.7 H2439.5" stroke="#d6d6d6" stroke-width="2"/><path d="M895 727.8 H2439.5" stroke="#d6d6d6" stroke-width="2"/><path d="M895 475.9 H2439.5" stroke="#d6d6d6" stroke-width="2"/><path d="M895 224 H2439.5" stroke="#d6d6d6" stroke-width="2"/><path d="M922.0 732.2 L925.0 754.8 L928.1 775.5 L931.1 769.4 L934.1 772.0 L937.2 767.9 L940.2 766.4 L943.2 767.6 L946.2 778.6 L949.3 765.0 L952.3 1004.9 L955.3 996.5 L958.4 988.4 L961.4 992.2 L964.4 986.3 L967.5 983.4 L970.5 976.2 L973.5 975.6 L976.6 962.2 L979.6 955.6 L982.6 698.2 L985.7 702.0 L988.7 702.3 L991.7 695.3 L994.7 696.7 L997.8 698.8 L1000.8 712.4 L1003.8 700.5 L1006.9 706.0 L1009.9 704.0 L1012.9 957.3 L1016.0 956.7 L1019.0 956.1 L1022.0 955.8 L1025.1 961.7 L1028.1 953.8 L1031.1 961.7 L1034.2 943.6 L1037.2 937.3 L1040.2 941.9 L1043.2 699.3 L1046.3 696.2 L1049.3 700.2 L1052.3 697.6 L1055.4 698.8 L1058.4 697.6 L1061.4 691.2 L1064.5 695.3 L1067.5 705.7 L1070.5 701.7 L1073.6 941.6 L1076.6 935.8 L1079.6 950.3 L1082.6 957.3 L1085.7 955.8 L1088.7 944.8 L1091.7 939.3 L1094.8 934.6 L1097.8 942.8 L1100.8 939.0 L1103.9 691.8 L1106.9 686.3 L1109.9 677.0 L1113.0 676.1 L1116.0 681.6 L1119.0 684.2 L1122.1 690.6 L1125.1 694.4 L1128.1 697.6 L1131.1 697.0 L1134.2 937.8 L1137.2 930.6 L1140.2 937.0 L1143.3 943.4 L1146.3 932.3 L1149.3 938.4 L1152.4 938.7 L1155.4 938.1 L1158.4 929.4 L1161.5 923.9 L1164.5 698.5 L1167.5 691.5 L1170.6 687.1 L1173.6 684.5 L1176.6 692.1 L1179.6 687.7 L1182.7 688.3 L1185.7 694.7 L1188.7 695.6 L1191.8 706.3 L1194.8 939.0 L1197.8 963.4 L1200.9 946.8 L1203.9 921.6 L1206.9 924.5 L1210.0 921.3 L1213.0 920.4 L1216.0 917.8 L1219.0 910.5 L1222.1 930.3 L1225.1 673.2 L1228.1 694.4 L1231.2 690.3 L1234.2 683.4 L1237.2 687.1 L1240.3 688.0 L1243.3 690.3 L1246.3 688.3 L1249.4 682.2 L1252.4 685.7 L1255.4 933.5 L1258.5 932.3 L1261.5 928.8 L1264.5 930.0 L1267.5 923.3 L1270.6 913.1 L1273.6 916.0 L1276.6 927.7 L1279.7 925.6 L1282.7 930.3 L1285.7 686.0 L1288.8 688.0 L1291.8 690.9 L1294.8 681.3 L1297.9 675.8 L1300.9 663.9 L1303.9 665.9 L1306.9 672.6 L1310.0 672.9 L1313.0 670.6 L1316.0 925.3 L1319.1 933.5 L1322.1 923.9 L1325.1 932.0 L1328.2 925.3 L1331.2 921.9 L1334.2 930.0 L1337.3 923.0 L1340.3 924.8 L1343.3 926.5 L1346.4 672.6 L1349.4 668.8 L1352.4 655.5 L1355.4 661.3 L1358.5 663.3 L1361.5 672.3 L1364.5 662.2 L1367.6 658.7 L1370.6 663.6 L1373.6 659.0 L1376.7 907.0 L1379.7 916.0 L1382.7 904.7 L1385.8 910.8 L1388.8 905.0 L1391.8 909.7 L1394.9 920.7 L1397.9 913.7 L1400.9 905.0 L1403.9 903.3 L1407.0 651.7 L1410.0 651.4 L1413.0 647.9 L1416.1 649.4 L1419.1 648.5 L1422.1 644.2 L1425.2 638.1 L1428.2 637.5 L1431.2 634.9 L1434.3 627.0 L1437.3 888.5 L1440.3 886.4 L1443.3 887.6 L1446.4 892.2 L1449.4 895.4 L1452.4 900.4 L1455.5 890.2 L1458.5 893.7 L1461.5 888.2 L1464.6 897.7 L1467.6 647.9 L1470.6 656.1 L1473.7 663.9 L1476.7 664.2 L1479.7 674.4 L1482.8 672.9 L1485.8 667.1 L1488.8 665.1 L1491.8 656.9 L1494.9 650.8 L1497.9 897.7 L1500.9 891.4 L1504.0 896.9 L1507.0 892.2 L1510.0 893.7 L1513.1 904.1 L1516.1 900.4 L1519.1 894.8 L1522.2 898.9 L1525.2 895.1 L1528.2 643.0 L1531.3 646.5 L1534.3 651.4 L1537.3 651.7 L1540.3 649.7 L1543.4 640.4 L1546.4 635.4 L1549.4 637.5 L1552.5 632.8 L1555.5 626.4 L1558.5 873.3 L1561.6 875.4 L1564.6 873.6 L1567.6 879.7 L1570.7 876.5 L1573.7 885.5 L1576.7 885.8 L1579.7 889.3 L1582.8 885.5 L1585.8 898.3 L1588.8 656.1 L1591.9 663.0 L1594.9 661.9 L1597.9 664.2 L1601.0 658.1 L1604.0 653.7 L1607.0 639.5 L1610.1 641.0 L1613.1 644.4 L1616.1 641.5 L1619.2 886.1 L1622.2 887.6 L1625.2 889.6 L1628.2 903.3 L1631.3 899.2 L1634.3 899.2 L1637.3 905.0 L1640.4 908.5 L1643.4 910.8 L1646.4 899.8 L1649.5 657.5 L1652.5 652.0 L1655.5 664.5 L1658.6 660.4 L1661.6 650.0 L1664.6 651.7 L1667.7 649.7 L1670.7 660.4 L1673.7 655.2 L1676.7 647.3 L1679.8 896.3 L1682.8 896.3 L1685.8 886.1 L1688.9 880.3 L1691.9 888.2 L1694.9 891.1 L1698.0 639.2 L1701.0 651.1 L1704.0 631.4 L1707.1 638.6 L1710.1 643.6 L1713.1 639.8 L1716.1 643.6 L1719.2 651.4 L1722.2 649.4 L1725.2 643.6 L1728.3 890.8 L1731.3 903.6 L1734.3 891.9 L1737.4 890.5 L1740.4 894.8 L1743.4 898.6 L1746.5 893.4 L1749.5 888.7 L1752.5 894.0 L1755.6 890.2 L1758.6 645.3 L1761.6 646.8 L1764.6 663.9 L1767.7 659.3 L1770.7 659.0 L1773.7 665.1 L1776.8 674.7 L1779.8 672.3 L1782.8 672.6 L1785.9 677.0 L1788.9 926.5 L1791.9 920.4 L1795.0 913.7 L1798.0 921.3 L1801.0 907.9 L1804.1 903.6 L1807.1 897.5 L1810.1 903.3 L1813.1 893.7 L1816.2 890.8 L1819.2 648.8 L1822.2 653.4 L1825.3 655.8 L1828.3 658.1 L1831.3 658.1 L1834.4 664.5 L1837.4 654.6 L1840.4 646.5 L1843.5 643.6 L1846.5 646.8 L1849.5 896.9 L1852.5 898.3 L1855.6 900.7 L1858.6 902.7 L1861.6 906.2 L1864.7 905.6 L1867.7 914.6 L1870.7 915.2 L1873.8 913.7 L1876.8 907.9 L1879.8 657.5 L1882.9 662.2 L1885.9 659.0 L1888.9 663.3 L1892.0 660.1 L1895.0 658.4 L1898.0 653.2 L1901.0 652.3 L1904.1 654.3 L1907.1 660.4 L1910.1 906.2 L1913.2 913.7 L1916.2 919.2 L1919.2 914.9 L1922.3 905.0 L1925.3 911.7 L1928.3 905.6 L1931.4 907.3 L1934.4 919.2 L1937.4 910.8 L1940.4 658.7 L1943.5 658.4 L1946.5 659.8 L1949.5 655.2 L1952.6 654.0 L1955.6 653.4 L1958.6 650.8 L1961.7 658.1 L1964.7 667.4 L1967.7 658.7 L1970.8 902.4 L1973.8 902.1 L1976.8 903.6 L1979.9 904.7 L1982.9 920.1 L1985.9 924.5 L1988.9 930.3 L1992.0 919.0 L1995.0 914.3 L1998.0 898.9 L2001.1 659.8 L2004.1 656.6 L2007.1 651.1 L2010.2 663.9 L2013.2 674.9 L2016.2 688.0 L2019.3 677.6 L2022.3 673.5 L2025.3 669.7 L2028.4 671.2 L2031.4 907.3 L2034.4 904.1 L2037.4 901.5 L2040.5 911.4 L2043.5 910.5 L2046.5 921.9 L2049.6 919.5 L2052.6 902.1 L2055.6 902.1 L2058.7 898.6 L2061.7 651.4 L2064.7 658.4 L2067.8 655.2 L2070.8 659.5 L2073.8 659.0 L2076.8 670.6 L2079.9 668.8 L2082.9 661.9 L2085.9 653.7 L2089.0 653.4 L2092.0 900.7 L2095.0 898.3 L2098.1 896.9 L2101.1 904.1 L2104.1 900.1 L2107.2 908.2 L2110.2 913.1 L2113.2 905.9 L2116.3 905.0 L2119.3 910.8 L2122.3 658.4 L2125.3 654.3 L2128.4 653.4 L2131.4 643.0 L2134.4 648.8 L2137.5 648.8 L2140.5 647.1 L2143.5 643.3 L2146.6 647.9 L2149.6 652.9 L2152.6 905.9 L2155.7 903.0 L2158.7 889.9 L2161.7 897.7 L2164.8 898.3 L2167.8 905.6 L2170.8 902.1 L2173.8 897.7 L2176.9 891.4 L2179.9 888.5 L2182.9 650.5 L2186.0 642.4 L2189.0 637.2 L2192.0 634.6 L2195.1 636.0 L2198.1 633.4 L2201.1 632.8 L2204.2 640.7 L2207.2 648.8 L2210.2 645.9 L2213.2 881.2 L2216.3 874.2 L2219.3 878.6 L2222.3 874.5 L2225.4 872.8 L2228.4 885.5 L2231.4 885.3 L2234.5 887.0 L2237.5 891.9 L2240.5 892.5 L2243.6 630.2 L2246.6 632.0 L2249.6 632.2 L2252.7 643.3 L2255.7 645.3 L2258.7 653.7 L2261.7 656.9 L2264.8 651.7 L2267.8 650.0 L2270.8 636.9 L2273.9 885.5 L2276.9 894.8 L2279.9 890.8 L2283.0 878.9 L2286.0 890.5 L2289.0 890.8 L2292.1 886.4 L2295.1 896.0 L2298.1 901.2 L2301.2 908.2 L2304.2 653.2 L2307.2 651.1 L2310.2 643.0 L2313.3 622.7 L2316.3 623.2 L2319.3 631.4 L2322.4 634.9 L2325.4 649.7 L2328.4 640.7 L2331.5 633.4 L2334.5 869.6 L2337.5 861.4 L2340.6 875.1 L2343.6 874.5 L2346.6 873.1 L2349.6 861.4 L2352.7 867.8 L2355.7 878.9 L2358.7 885.5 L2361.8 879.7 L2364.8 637.8 L2367.8 631.1 L2370.9 631.1 L2373.9 636.0 L2376.9 640.1 L2380.0 624.7 L2383.0 628.5 L2386.0 632.0 L2389.1 641.8 L2392.1 638.1 L2395.1 891.4 L2398.1 894.0 L2401.2 914.6 L2404.2 886.7 L2407.2 887.6 L2410.3 879.7 L2413.3 876.8 L2416.3 881.2 L2419.4 889.0 L2422.4 889.3 L2425.4 647.1 L2428.5 637.2 L2431.5 628.5 L2434.5 640.7" fill="none" stroke="#cc6d2b" stroke-width="1.05" stroke-linejoin="round" opacity="0.85"/><path d="M922.0 732.2h0M925.0 754.8h0M928.1 775.5h0M931.1 769.4h0M934.1 772.0h0M937.2 767.9h0M940.2 766.4h0M943.2 767.6h0M946.2 778.6h0M949.3 765.0h0M952.3 1004.9h0M955.3 996.5h0M958.4 988.4h0M961.4 992.2h0M964.4 986.3h0M967.5 983.4h0M970.5 976.2h0M973.5 975.6h0M976.6 962.2h0M979.6 955.6h0M982.6 698.2h0M985.7 702.0h0M988.7 702.3h0M991.7 695.3h0M994.7 696.7h0M997.8 698.8h0M1000.8 712.4h0M1003.8 700.5h0M1006.9 706.0h0M1009.9 704.0h0M1012.9 957.3h0M1016.0 956.7h0M1019.0 956.1h0M1022.0 955.8h0M1025.1 961.7h0M1028.1 953.8h0M1031.1 961.7h0M1034.2 943.6h0M1037.2 937.3h0M1040.2 941.9h0M1043.2 699.3h0M1046.3 696.2h0M1049.3 700.2h0M1052.3 697.6h0M1055.4 698.8h0M1058.4 697.6h0M1061.4 691.2h0M1064.5 695.3h0M1067.5 705.7h0M1070.5 701.7h0M1073.6 941.6h0M1076.6 935.8h0M1079.6 950.3h0M1082.6 957.3h0M1085.7 955.8h0M1088.7 944.8h0M1091.7 939.3h0M1094.8 934.6h0M1097.8 942.8h0M1100.8 939.0h0M1103.9 691.8h0M1106.9 686.3h0M1109.9 677.0h0M1113.0 676.1h0M1116.0 681.6h0M1119.0 684.2h0M1122.1 690.6h0M1125.1 694.4h0M1128.1 697.6h0M1131.1 697.0h0M1134.2 937.8h0M1137.2 930.6h0M1140.2 937.0h0M1143.3 943.4h0M1146.3 932.3h0M1149.3 938.4h0M1152.4 938.7h0M1155.4 938.1h0M1158.4 929.4h0M1161.5 923.9h0M1164.5 698.5h0M1167.5 691.5h0M1170.6 687.1h0M1173.6 684.5h0M1176.6 692.1h0M1179.6 687.7h0M1182.7 688.3h0M1185.7 694.7h0M1188.7 695.6h0M1191.8 706.3h0M1194.8 939.0h0M1197.8 963.4h0M1200.9 946.8h0M1203.9 921.6h0M1206.9 924.5h0M1210.0 921.3h0M1213.0 920.4h0M1216.0 917.8h0M1219.0 910.5h0M1222.1 930.3h0M1225.1 673.2h0M1228.1 694.4h0M1231.2 690.3h0M1234.2 683.4h0M1237.2 687.1h0M1240.3 688.0h0M1243.3 690.3h0M1246.3 688.3h0M1249.4 682.2h0M1252.4 685.7h0M1255.4 933.5h0M1258.5 932.3h0M1261.5 928.8h0M1264.5 930.0h0M1267.5 923.3h0M1270.6 913.1h0M1273.6 916.0h0M1276.6 927.7h0M1279.7 925.6h0M1282.7 930.3h0M1285.7 686.0h0M1288.8 688.0h0M1291.8 690.9h0M1294.8 681.3h0M1297.9 675.8h0M1300.9 663.9h0M1303.9 665.9h0M1306.9 672.6h0M1310.0 672.9h0M1313.0 670.6h0M1316.0 925.3h0M1319.1 933.5h0M1322.1 923.9h0M1325.1 932.0h0M1328.2 925.3h0M1331.2 921.9h0M1334.2 930.0h0M1337.3 923.0h0M1340.3 924.8h0M1343.3 926.5h0M1346.4 672.6h0M1349.4 668.8h0M1352.4 655.5h0M1355.4 661.3h0M1358.5 663.3h0M1361.5 672.3h0M1364.5 662.2h0M1367.6 658.7h0M1370.6 663.6h0M1373.6 659.0h0M1376.7 907.0h0M1379.7 916.0h0M1382.7 904.7h0M1385.8 910.8h0M1388.8 905.0h0M1391.8 909.7h0M1394.9 920.7h0M1397.9 913.7h0M1400.9 905.0h0M1403.9 903.3h0M1407.0 651.7h0M1410.0 651.4h0M1413.0 647.9h0M1416.1 649.4h0M1419.1 648.5h0M1422.1 644.2h0M1425.2 638.1h0M1428.2 637.5h0M1431.2 634.9h0M1434.3 627.0h0M1437.3 888.5h0M1440.3 886.4h0M1443.3 887.6h0M1446.4 892.2h0M1449.4 895.4h0M1452.4 900.4h0M1455.5 890.2h0M1458.5 893.7h0M1461.5 888.2h0M1464.6 897.7h0M1467.6 647.9h0M1470.6 656.1h0M1473.7 663.9h0M1476.7 664.2h0M1479.7 674.4h0M1482.8 672.9h0M1485.8 667.1h0M1488.8 665.1h0M1491.8 656.9h0M1494.9 650.8h0M1497.9 897.7h0M1500.9 891.4h0M1504.0 896.9h0M1507.0 892.2h0M1510.0 893.7h0M1513.1 904.1h0M1516.1 900.4h0M1519.1 894.8h0M1522.2 898.9h0M1525.2 895.1h0M1528.2 643.0h0M1531.3 646.5h0M1534.3 651.4h0M1537.3 651.7h0M1540.3 649.7h0M1543.4 640.4h0M1546.4 635.4h0M1549.4 637.5h0M1552.5 632.8h0M1555.5 626.4h0M1558.5 873.3h0M1561.6 875.4h0M1564.6 873.6h0M1567.6 879.7h0M1570.7 876.5h0M1573.7 885.5h0M1576.7 885.8h0M1579.7 889.3h0M1582.8 885.5h0M1585.8 898.3h0M1588.8 656.1h0M1591.9 663.0h0M1594.9 661.9h0M1597.9 664.2h0M1601.0 658.1h0M1604.0 653.7h0M1607.0 639.5h0M1610.1 641.0h0M1613.1 644.4h0M1616.1 641.5h0M1619.2 886.1h0M1622.2 887.6h0M1625.2 889.6h0M1628.2 903.3h0M1631.3 899.2h0M1634.3 899.2h0M1637.3 905.0h0M1640.4 908.5h0M1643.4 910.8h0M1646.4 899.8h0M1649.5 657.5h0M1652.5 652.0h0M1655.5 664.5h0M1658.6 660.4h0M1661.6 650.0h0M1664.6 651.7h0M1667.7 649.7h0M1670.7 660.4h0M1673.7 655.2h0M1676.7 647.3h0M1679.8 896.3h0M1682.8 896.3h0M1685.8 886.1h0M1688.9 880.3h0M1691.9 888.2h0M1694.9 891.1h0M1698.0 639.2h0M1701.0 651.1h0M1704.0 631.4h0M1707.1 638.6h0M1710.1 643.6h0M1713.1 639.8h0M1716.1 643.6h0M1719.2 651.4h0M1722.2 649.4h0M1725.2 643.6h0M1728.3 890.8h0M1731.3 903.6h0M1734.3 891.9h0M1737.4 890.5h0M1740.4 894.8h0M1743.4 898.6h0M1746.5 893.4h0M1749.5 888.7h0M1752.5 894.0h0M1755.6 890.2h0M1758.6 645.3h0M1761.6 646.8h0M1764.6 663.9h0M1767.7 659.3h0M1770.7 659.0h0M1773.7 665.1h0M1776.8 674.7h0M1779.8 672.3h0M1782.8 672.6h0M1785.9 677.0h0M1788.9 926.5h0M1791.9 920.4h0M1795.0 913.7h0M1798.0 921.3h0M1801.0 907.9h0M1804.1 903.6h0M1807.1 897.5h0M1810.1 903.3h0M1813.1 893.7h0M1816.2 890.8h0M1819.2 648.8h0M1822.2 653.4h0M1825.3 655.8h0M1828.3 658.1h0M1831.3 658.1h0M1834.4 664.5h0M1837.4 654.6h0M1840.4 646.5h0M1843.5 643.6h0M1846.5 646.8h0M1849.5 896.9h0M1852.5 898.3h0M1855.6 900.7h0M1858.6 902.7h0M1861.6 906.2h0M1864.7 905.6h0M1867.7 914.6h0M1870.7 915.2h0M1873.8 913.7h0M1876.8 907.9h0M1879.8 657.5h0M1882.9 662.2h0M1885.9 659.0h0M1888.9 663.3h0M1892.0 660.1h0M1895.0 658.4h0M1898.0 653.2h0M1901.0 652.3h0M1904.1 654.3h0M1907.1 660.4h0M1910.1 906.2h0M1913.2 913.7h0M1916.2 919.2h0M1919.2 914.9h0M1922.3 905.0h0M1925.3 911.7h0M1928.3 905.6h0M1931.4 907.3h0M1934.4 919.2h0M1937.4 910.8h0M1940.4 658.7h0M1943.5 658.4h0M1946.5 659.8h0M1949.5 655.2h0M1952.6 654.0h0M1955.6 653.4h0M1958.6 650.8h0M1961.7 658.1h0M1964.7 667.4h0M1967.7 658.7h0M1970.8 902.4h0M1973.8 902.1h0M1976.8 903.6h0M1979.9 904.7h0M1982.9 920.1h0M1985.9 924.5h0M1988.9 930.3h0M1992.0 919.0h0M1995.0 914.3h0M1998.0 898.9h0M2001.1 659.8h0M2004.1 656.6h0M2007.1 651.1h0M2010.2 663.9h0M2013.2 674.9h0M2016.2 688.0h0M2019.3 677.6h0M2022.3 673.5h0M2025.3 669.7h0M2028.4 671.2h0M2031.4 907.3h0M2034.4 904.1h0M2037.4 901.5h0M2040.5 911.4h0M2043.5 910.5h0M2046.5 921.9h0M2049.6 919.5h0M2052.6 902.1h0M2055.6 902.1h0M2058.7 898.6h0M2061.7 651.4h0M2064.7 658.4h0M2067.8 655.2h0M2070.8 659.5h0M2073.8 659.0h0M2076.8 670.6h0M2079.9 668.8h0M2082.9 661.9h0M2085.9 653.7h0M2089.0 653.4h0M2092.0 900.7h0M2095.0 898.3h0M2098.1 896.9h0M2101.1 904.1h0M2104.1 900.1h0M2107.2 908.2h0M2110.2 913.1h0M2113.2 905.9h0M2116.3 905.0h0M2119.3 910.8h0M2122.3 658.4h0M2125.3 654.3h0M2128.4 653.4h0M2131.4 643.0h0M2134.4 648.8h0M2137.5 648.8h0M2140.5 647.1h0M2143.5 643.3h0M2146.6 647.9h0M2149.6 652.9h0M2152.6 905.9h0M2155.7 903.0h0M2158.7 889.9h0M2161.7 897.7h0M2164.8 898.3h0M2167.8 905.6h0M2170.8 902.1h0M2173.8 897.7h0M2176.9 891.4h0M2179.9 888.5h0M2182.9 650.5h0M2186.0 642.4h0M2189.0 637.2h0M2192.0 634.6h0M2195.1 636.0h0M2198.1 633.4h0M2201.1 632.8h0M2204.2 640.7h0M2207.2 648.8h0M2210.2 645.9h0M2213.2 881.2h0M2216.3 874.2h0M2219.3 878.6h0M2222.3 874.5h0M2225.4 872.8h0M2228.4 885.5h0M2231.4 885.3h0M2234.5 887.0h0M2237.5 891.9h0M2240.5 892.5h0M2243.6 630.2h0M2246.6 632.0h0M2249.6 632.2h0M2252.7 643.3h0M2255.7 645.3h0M2258.7 653.7h0M2261.7 656.9h0M2264.8 651.7h0M2267.8 650.0h0M2270.8 636.9h0M2273.9 885.5h0M2276.9 894.8h0M2279.9 890.8h0M2283.0 878.9h0M2286.0 890.5h0M2289.0 890.8h0M2292.1 886.4h0M2295.1 896.0h0M2298.1 901.2h0M2301.2 908.2h0M2304.2 653.2h0M2307.2 651.1h0M2310.2 643.0h0M2313.3 622.7h0M2316.3 623.2h0M2319.3 631.4h0M2322.4 634.9h0M2325.4 649.7h0M2328.4 640.7h0M2331.5 633.4h0M2334.5 869.6h0M2337.5 861.4h0M2340.6 875.1h0M2343.6 874.5h0M2346.6 873.1h0M2349.6 861.4h0M2352.7 867.8h0M2355.7 878.9h0M2358.7 885.5h0M2361.8 879.7h0M2364.8 637.8h0M2367.8 631.1h0M2370.9 631.1h0M2373.9 636.0h0M2376.9 640.1h0M2380.0 624.7h0M2383.0 628.5h0M2386.0 632.0h0M2389.1 641.8h0M2392.1 638.1h0M2395.1 891.4h0M2398.1 894.0h0M2401.2 914.6h0M2404.2 886.7h0M2407.2 887.6h0M2410.3 879.7h0M2413.3 876.8h0M2416.3 881.2h0M2419.4 889.0h0M2422.4 889.3h0M2425.4 647.1h0M2428.5 637.2h0M2431.5 628.5h0M2434.5 640.7h0" fill="none" stroke="#cc6d2b" stroke-width="5" stroke-linecap="round"/><path d="M917.7 1552.3 V1534.8" stroke="#000" stroke-width="3.6"/><path d="M895 1483.5 H913.2" stroke="#000" stroke-width="3.8"/><path d="M1220.96 1552.3 V1534.8" stroke="#000" stroke-width="3.6"/><path d="M895 1231.6 H913.2" stroke="#000" stroke-width="3.8"/><path d="M1524.22 1552.3 V1534.8" stroke="#000" stroke-width="3.6"/><path d="M895 979.7 H913.2" stroke="#000" stroke-width="3.8"/><path d="M1827.48 1552.3 V1534.8" stroke="#000" stroke-width="3.6"/><path d="M895 727.8 H913.2" stroke="#000" stroke-width="3.8"/><path d="M2130.74 1552.3 V1534.8" stroke="#000" stroke-width="3.6"/><path d="M895 475.9 H913.2" stroke="#000" stroke-width="3.8"/><path d="M2434 1552.3 V1534.8" stroke="#000" stroke-width="3.6"/><path d="M895 224 H913.2" stroke="#000" stroke-width="3.8"/><rect x="895" y="129.7" width="1544.5" height="1422.6" fill="none" stroke="#000" stroke-width="3.4"/><rect x="947.4" y="160.8" width="305" height="79.4" fill="#fff" stroke="#000" stroke-width="1.7"/><path d="M960 194.2H1045.8" stroke="#cc6d2b" stroke-width="1.3"/><circle cx="1003" cy="194.2" r="2.4" fill="#cc6d2b"/><rect x="1555.7" y="517.2" width="154.2" height="76.8" fill="none" stroke="#4a4a4a" stroke-width="1.1"/><rect x="1540.7" y="765.2" width="154.1" height="76.8" fill="none" stroke="#4a4a4a" stroke-width="1.1"/><circle cx="1694.9" cy="891.1" r="8.6" fill="none" stroke="#000" stroke-width="1.7"/><circle cx="1710.1" cy="643.6" r="8.6" fill="none" stroke="#000" stroke-width="1.7"/></svg>
<span class="t" style="left:1057.97px;top:172.3px;font-size:36.5px;color:#000;font-family:'Liberation Sans',sans-serif;transform:scaleX(0.8936);transform-origin:0 0;">20</span>
<span class="t" style="left:1107.71px;top:172.3px;font-size:36.5px;color:#000;font-family:'Liberation Sans',sans-serif;transform:scaleX(0.9641);transform-origin:0 0;">MOhm</span>
<span class="t" style="left:1563.8px;top:520.12px;font-size:27.5px;color:#000;font-family:'Liberation Sans',sans-serif;transform:scaleX(1.1538);transform-origin:0 0;">X:</span>
<span class="t" style="left:1601.9px;top:520.12px;font-size:27.5px;color:#000;font-family:'Liberation Sans',sans-serif;letter-spacing:0.09px;">5.22</span>
<span class="t" style="left:1563.75px;top:559.62px;font-size:27.5px;color:#000;font-family:'Liberation Sans',sans-serif;transform:scaleX(1.2355);transform-origin:0 0;">Y:</span>
<span class="t" style="left:1602.61px;top:559.62px;font-size:27.5px;color:#000;font-family:'Liberation Sans',sans-serif;letter-spacing:-0.3px;">19.6034</span>
<span class="t" style="left:1549.2px;top:768.22px;font-size:27.5px;color:#000;font-family:'Liberation Sans',sans-serif;transform:scaleX(1.1495);transform-origin:0 0;">X:</span>
<span class="t" style="left:1588.1px;top:768.22px;font-size:27.5px;color:#000;font-family:'Liberation Sans',sans-serif;letter-spacing:-0.31px;">5.12</span>
<span class="t" style="left:1549.16px;top:807.52px;font-size:27.5px;color:#000;font-family:'Liberation Sans',sans-serif;transform:scaleX(1.2308);transform-origin:0 0;">Y:</span>
<span class="t" style="left:1587.11px;top:807.52px;font-size:27.5px;color:#000;font-family:'Liberation Sans',sans-serif;letter-spacing:-0.33px;">19.5935</span>
<span class="t" style="left:793.76px;top:1464.43px;font-size:38.6px;color:#000;font-family:'Liberation Sans',sans-serif;transform:scaleX(0.9450);transform-origin:0 0;">19,57</span>
<span class="t" style="left:907.86px;top:1558.53px;font-size:38.6px;color:#000;font-family:'Liberation Sans',sans-serif;transform:scaleX(0.9150);transform-origin:0 0;">0</span>
<span class="t" style="left:793.5px;top:1212.53px;font-size:38.6px;color:#000;font-family:'Liberation Sans',sans-serif;transform:scaleX(0.9450);transform-origin:0 0;">19,58</span>
<span class="t" style="left:1211.14px;top:1558.53px;font-size:38.6px;color:#000;font-family:'Liberation Sans',sans-serif;transform:scaleX(0.9150);transform-origin:0 0;">2</span>
<span class="t" style="left:793.65px;top:960.63px;font-size:38.6px;color:#000;font-family:'Liberation Sans',sans-serif;transform:scaleX(0.9450);transform-origin:0 0;">19,59</span>
<span class="t" style="left:1514.52px;top:1558.53px;font-size:38.6px;color:#000;font-family:'Liberation Sans',sans-serif;transform:scaleX(0.9150);transform-origin:0 0;">4</span>
<span class="t" style="left:813.78px;top:708.73px;font-size:38.6px;color:#000;font-family:'Liberation Sans',sans-serif;transform:scaleX(0.9450);transform-origin:0 0;">19,6</span>
<span class="t" style="left:1817.54px;top:1558.53px;font-size:38.6px;color:#000;font-family:'Liberation Sans',sans-serif;transform:scaleX(0.9150);transform-origin:0 0;">6</span>
<span class="t" style="left:793.69px;top:456.83px;font-size:38.6px;color:#000;font-family:'Liberation Sans',sans-serif;transform:scaleX(0.9450);transform-origin:0 0;">19,61</span>
<span class="t" style="left:2120.92px;top:1558.53px;font-size:38.6px;color:#000;font-family:'Liberation Sans',sans-serif;transform:scaleX(0.9150);transform-origin:0 0;">8</span>
<span class="t" style="left:793.76px;top:204.93px;font-size:38.6px;color:#000;font-family:'Liberation Sans',sans-serif;transform:scaleX(0.9450);transform-origin:0 0;">19,62</span>
<span class="t" style="left:2413.69px;top:1558.53px;font-size:38.6px;color:#000;font-family:'Liberation Sans',sans-serif;transform:scaleX(0.9150);transform-origin:0 0;">10</span>
<span class="t" style="left:1584.57px;top:1611.36px;font-size:39.5px;color:#000;font-family:'Liberation Sans',sans-serif;font-weight:bold;letter-spacing:1.83px;-webkit-text-stroke:0.5px #000;">Time</span>
<span class="t" style="left:1698.86px;top:1611.36px;font-size:39.5px;color:#000;font-family:'Liberation Sans',sans-serif;font-weight:bold;letter-spacing:1.2px;-webkit-text-stroke:0.5px #000;">(s)</span>
<div class="a" style="left:739px;top:840.5px;width:0;height:0;transform:rotate(-90deg);">
<span class="t" style="left:-125.72px;top:-20.38px;font-size:42.5px;color:#000;font-family:'Liberation Sans',sans-serif;font-weight:bold;transform:scaleX(0.8716);transform-origin:0 0;-webkit-text-stroke:0.5px #000;">Current</span>
<span class="t" style="left:40.42px;top:-20.38px;font-size:42.5px;color:#000;font-family:'Liberation Sans',sans-serif;font-weight:bold;letter-spacing:-0.83px;-webkit-text-stroke:0.5px #000;">(nA)</span>
</div>
<div class="a" style="left:2490.5px;top:54.5px;width:381.7px;height:66.1px;background:#f9f9f9;border-radius:10px;border:1.2px solid #ececec;box-sizing:border-box;"></div>
<div class="a" style="left:2517.5px;top:63.8px;width:52.9px;height:45.6px;background:#efefef;border-radius:9px;"></div>
<div class="a" style="left:2610.6px;top:69.3px;width:51.9px;height:36.5px;background:#efefef;border-radius:9px;"></div>
<div class="a" style="left:2703px;top:67.1px;width:47px;height:40.5px;background:#efefef;border-radius:9px;"></div>
<div class="a" style="left:2790.6px;top:63.8px;width:54.4px;height:47.1px;background:#efefef;border-radius:9px;"></div>
<svg class="a" style="left:2490px;top:55px;" width="382" height="66" viewBox="0 0 382 66"><g stroke="#1e1e1e" stroke-width="4.2" stroke-linecap="round" fill="none"><path d="M46 21.4H71.6 M46 32H71.6 M46 42.6H71.6"/><path d="M36.8 21.4h0 M36.8 32h0 M36.8 42.6h0" stroke-width="4.8"/></g><g stroke="#f00" stroke-width="1.5" fill="none" stroke-linejoin="round"><path d="M126.4 18.6H165.4"/><path d="M138.4 18.4 Q138.4 13.6 142 13.6 H150 Q153.4 13.6 153.4 18.4"/><path d="M131 19 L134 48.4 Q134.4 52 138 52 H154 Q157.6 52 158 48.4 L161 19"/><path d="M139.6 24.6L140.6 45.8 M146 24.6V45.8 M152.4 24.6L151.4 45.8"/></g><g stroke="#111" stroke-width="2.3" fill="none" stroke-linejoin="round"><path d="M222.6 18.2 H243.4 L250 24.8 V43.6 Q250 45.8 247.8 45.8 H224.8 Q222.6 45.8 222.6 43.6 Z"/><path d="M230.6 18.6 V25.4 H241.6 V18.6"/><path d="M227.6 45.4 V36.4 H245 V45.4"/></g><path d="M320.88 16.87 L320.88 14.86 Q320.88 13.06 322.67 13.06 L325.93 13.06 Q327.72 13.06 327.72 14.86 L327.72 16.87 L330.45 18.01 L331.88 16.58 Q333.15 15.31 334.42 16.58 L336.72 18.88 Q337.99 20.15 336.72 21.42 L335.29 22.85 L336.43 25.58 L338.44 25.58 Q340.24 25.58 340.24 27.37 L340.24 30.63 Q340.24 32.42 338.44 32.42 L336.43 32.42 L335.29 35.15 L336.72 36.58 Q337.99 37.85 336.72 39.12 L334.42 41.42 Q333.15 42.69 331.88 41.42 L330.45 39.99 L327.72 41.13 L327.72 43.14 Q327.72 44.94 325.93 44.94 L322.67 44.94 Q320.88 44.94 320.88 43.14 L320.88 41.13 L318.15 39.99 L316.72 41.42 Q315.45 42.69 314.18 41.42 L311.88 39.12 Q310.61 37.85 311.88 36.58 L313.31 35.15 L312.17 32.42 L310.16 32.42 Q308.36 32.42 308.36 30.63 L308.36 27.37 Q308.36 25.58 310.16 25.58 L312.17 25.58 L313.31 22.85 L311.88 21.42 Q310.61 20.15 311.88 18.88 L314.18 16.58 Q315.45 15.31 316.72 16.58 L318.15 18.01 Z" fill="none" stroke="#111" stroke-width="1.9" stroke-linejoin="round"/><circle cx="324.3" cy="29" r="7.9" fill="none" stroke="#111" stroke-width="1.9"/><rect x="324.6" y="31" width="25" height="24" fill="#efefef"/><rect x="328.2" y="34.4" width="17.1" height="15.8" rx="2.8" fill="#efefef" stroke="#111" stroke-width="2.1"/><path d="M329.2 46.4 Q334 41.4 338 45.4 L341.4 49.6 M338.4 45.6 L344.4 40.6" stroke="#111" stroke-width="1.7" fill="none"/><circle cx="339.4" cy="38.6" r="1.2" fill="#111"/></svg>
<div class="a" style="left:2490px;top:124px;width:381.5px;height:1415px;background:#fff;border-radius:0 0 8px 8px;"></div>
<svg class="a" style="left:2498px;top:142px;" width="18" height="14" viewBox="0 0 18 14"><path d="M4.1 4.5L9.3 9.8L14.7 4.5" fill="none" stroke="#222" stroke-width="1.9"/></svg>
<span class="t" style="left:2531.33px;top:128.53px;font-size:36px;color:#000;font-family:'Liberation Sans',sans-serif;transform:scaleX(0.9624);transform-origin:0 0;">Amperometry</span>
<div class="a" style="left:2490px;top:178.4px;width:70.4px;height:42.9px;background:#f3f3f3;"></div>
<div class="a" style="left:2560.4px;top:174.8px;width:312.3px;height:49.9px;background:#d3d3d3;border-radius:5px;"></div>
<div class="a" style="left:2565px;top:185px;width:28px;height:28px;background:#c86b2a;"></div>
<span class="t" style="left:2605.3px;top:179.75px;font-size:35.5px;color:#000;font-family:'Liberation Sans',sans-serif;font-style:italic;transform:scaleX(0.9390);transform-origin:0 0;">20</span>
<span class="t" style="left:2655.13px;top:179.75px;font-size:35.5px;color:#000;font-family:'Liberation Sans',sans-serif;font-style:italic;letter-spacing:0.03px;">MOhm</span>
<div class="a" style="left:2488.2px;top:1561px;width:386.8px;height:116.6px;background:#fff;"></div>
<svg class="a" style="left:2521px;top:1600px;" width="42" height="39" viewBox="0 0 42 39"><rect x="0.2" y="0" width="1.4" height="38.4" fill="#0d4d85"/><rect x="4.6" y="0" width="2.6" height="38.4" fill="#0d4d85"/><rect x="10.4" y="0" width="4.2" height="38.4" fill="#0d4d85"/><rect x="18.8" y="0" width="5.6" height="38.4" fill="#0d4d85"/><rect x="29.6" y="0" width="9.4" height="38.4" fill="#0d4d85"/></svg>
<span class="t" style="left:2575.33px;top:1594.24px;font-size:50.4px;color:#0d4d85;font-family:'Liberation Sans',sans-serif;letter-spacing:1.86px;-webkit-text-stroke:1.9px #0d4d85;">SENSITIFY</span>
</body></html>
